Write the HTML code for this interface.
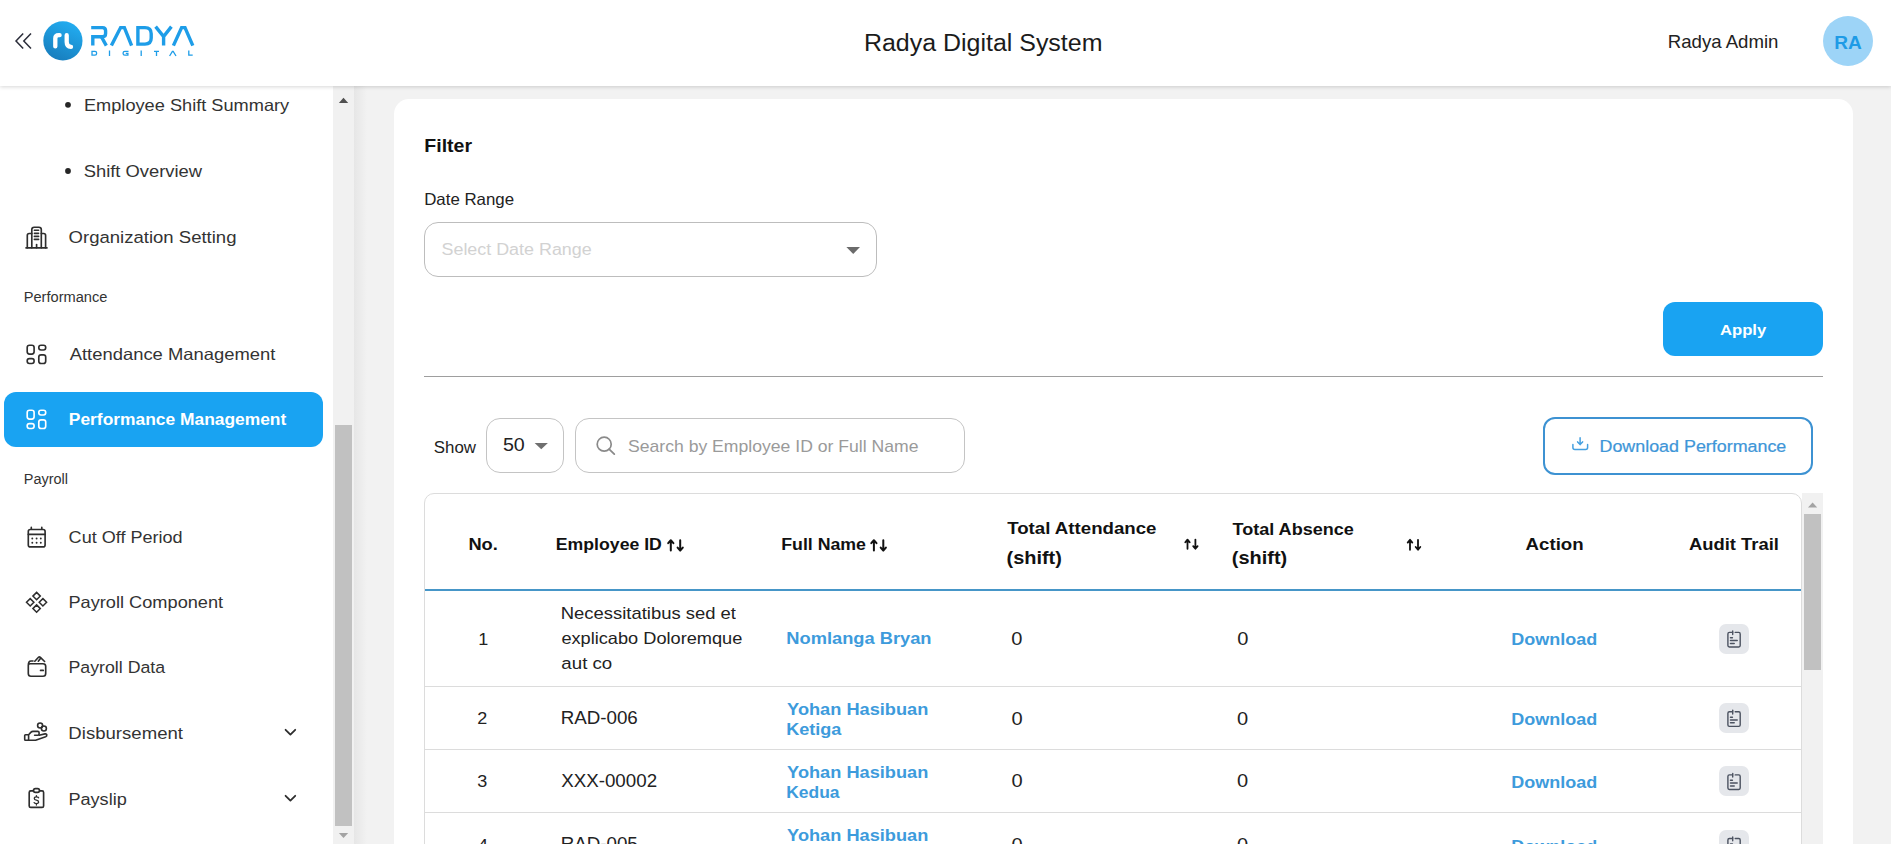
<!DOCTYPE html>
<html><head><meta charset="utf-8">
<style>
*{box-sizing:border-box;margin:0;padding:0}
html,body{width:1891px;height:844px;overflow:hidden;background:#f2f2f2;font-family:"Liberation Sans",sans-serif}
.t{position:absolute;white-space:nowrap;line-height:1}
.b{position:absolute}
svg{position:absolute;overflow:visible}
</style></head><body>
<div class="b" style="left:394px;top:99px;width:1459px;height:800px;background:#fff;border-radius:15px"></div>
<div class="b" style="left:0;top:86px;width:333px;height:758px;background:#fff"></div>
<div class="b" style="left:333px;top:86px;width:21px;height:758px;background:#f1f1f1"></div>
<div class="b" style="left:354px;top:86px;width:13px;height:758px;background:linear-gradient(90deg,#e6e6e6,#f2f2f2)"></div>
<div class="b" style="left:335px;top:425px;width:17px;height:401px;background:#c1c1c1"></div>
<svg style="left:0;top:0" width="1" height="1"><path d="M338.9,103.1 L343.5,97.8 L348.2,103.1 Z" fill="#505050"/><path d="M338.9,833.1 L348.2,833.1 L343.5,838.1 Z" fill="#a3a3a3"/></svg>
<svg style="left:0;top:0" width="1" height="1"><circle cx="68" cy="104.8" r="2.9" fill="#262626"/><circle cx="68" cy="171" r="2.9" fill="#262626"/></svg>
<div class="t" style="left:83.98px;top:95.99px;font-size:18.2px;color:#333333;transform:scaleY(0.93);transform-origin:0 15.41px;">Employee Shift Summary</div>
<div class="t" style="left:83.68px;top:162.15px;font-size:18.37px;color:#333333;transform:scaleY(0.93);transform-origin:0 15.55px;">Shift Overview</div>
<div class="t" style="left:68.57px;top:228.10px;font-size:18.55px;color:#333333;transform:scaleY(0.93);transform-origin:0 15.70px;">Organization Setting</div>
<div class="t" style="left:23.68px;top:290.21px;font-size:14.64px;color:#333;">Performance</div>
<div class="t" style="left:69.70px;top:345.12px;font-size:18.41px;color:#333333;transform:scaleY(0.93);transform-origin:0 15.58px;">Attendance Management</div>
<div class="b" style="left:4px;top:392px;width:319px;height:55px;border-radius:12px;background:#19a3f2"></div>
<div class="t" style="left:68.84px;top:410.97px;font-size:17.4px;color:#fff;font-weight:bold;transform:scaleY(0.93);transform-origin:0 14.73px;">Performance Management</div>
<div class="t" style="left:23.79px;top:472.14px;font-size:14.48px;color:#333;">Payroll</div>
<div class="t" style="left:68.60px;top:528.31px;font-size:18.06px;color:#333333;transform:scaleY(0.93);transform-origin:0 15.29px;">Cut Off Period</div>
<div class="t" style="left:68.48px;top:593.19px;font-size:18.21px;color:#333333;transform:scaleY(0.93);transform-origin:0 15.41px;">Payroll Component</div>
<div class="t" style="left:68.42px;top:659.15px;font-size:17.78px;color:#333333;transform:scaleY(0.93);transform-origin:0 15.05px;">Payroll Data</div>
<div class="t" style="left:68.35px;top:723.97px;font-size:18.58px;color:#333333;transform:scaleY(0.93);transform-origin:0 15.73px;">Disbursement</div>
<div class="t" style="left:68.39px;top:790.25px;font-size:18.13px;color:#333333;transform:scaleY(0.93);transform-origin:0 15.35px;">Payslip</div>
<svg style="left:0;top:0" width="1" height="1">
<g fill="none" stroke="#2e2e2e" stroke-width="1.65" stroke-linecap="round" stroke-linejoin="round">
<path d="M31.8,247.8 V229.6 Q31.8,227.2 34.2,227.2 H38.9 Q41.3,227.2 41.3,229.6 V247.8"/>
<path d="M31.8,233.5 H29.2 Q27.3,233.5 27.3,235.4 V247.8"/>
<path d="M41.3,233.5 H43.7 Q45.6,233.5 45.6,235.4 V247.8"/>
<path d="M26,247.9 H47"/>
<path d="M34.4,230.2 H38.6 M34.4,233.3 H38.6 M34.4,236.4 H38.6 M34.4,239.4 H38.6"/>
<path d="M36.6,244.6 V247.8"/>
</g>
<g fill="none" stroke="#2e2e2e" stroke-width="1.65" transform="translate(0,0)">
<rect x="27.2" y="345.2" width="6.9" height="8.9" rx="2.3"/>
<rect x="38.8" y="345.2" width="6.9" height="4.8" rx="2.2"/>
<rect x="27.2" y="358.6" width="6.9" height="4.9" rx="2.2"/>
<rect x="38.8" y="354.8" width="6.9" height="8.7" rx="2.3"/>
</g><g fill="none" stroke="#ffffff" stroke-width="1.65" transform="translate(0,65)">
<rect x="27.2" y="345.2" width="6.9" height="8.9" rx="2.3"/>
<rect x="38.8" y="345.2" width="6.9" height="4.8" rx="2.2"/>
<rect x="27.2" y="358.6" width="6.9" height="4.9" rx="2.2"/>
<rect x="38.8" y="354.8" width="6.9" height="8.7" rx="2.3"/>
</g><g fill="none" stroke="#2e2e2e" stroke-width="1.65" stroke-linecap="round">
<rect x="28.3" y="529.5" width="16.8" height="17.4" rx="2"/>
<path d="M28.3,534.4 H45.1"/>
<path d="M31.3,527.4 V529.2 M41.8,527.4 V529.2"/>
</g>
<g fill="#2e2e2e"><circle cx="32.3" cy="538.5" r="0.95"/><circle cx="36.6" cy="538.5" r="0.95"/><circle cx="40.8" cy="538.5" r="0.95"/><circle cx="32.3" cy="542.7" r="0.95"/><circle cx="36.6" cy="542.7" r="0.95"/><circle cx="40.8" cy="542.7" r="0.95"/></g>
<path d="M36.6,592.4 L40.300000000000004,596.1 L36.6,599.8000000000001 L32.9,596.1 Z M30.2,598.5999999999999 L33.9,602.3 L30.2,606.0 L26.5,602.3 Z M42.9,598.5999999999999 L46.6,602.3 L42.9,606.0 L39.199999999999996,602.3 Z M36.6,604.9 L40.300000000000004,608.6 L36.6,612.3000000000001 L32.9,608.6 Z " fill="none" stroke="#2e2e2e" stroke-width="1.5" stroke-linejoin="miter"/>
<g fill="none" stroke="#2e2e2e" stroke-width="1.65" stroke-linecap="round" stroke-linejoin="round">
<path d="M28.3,665.5 V673.5 Q28.3,676.2 31,676.2 H43 Q45.7,676.2 45.7,673.5 V666.3 Q45.7,663.7 43,663.7 H30.3 Q28.3,663.7 28.3,665.5 Q28.3,661 31,661 H33"/>
<path d="M34.8,661.2 L38.5,657.3 Q39.3,656.5 40.1,657.2 L44.6,661.5"/>
<path d="M38.3,661.2 L40.6,658.2"/>
<path d="M40.6,670.4 H43.2" stroke-width="1.8"/>
</g>
<g fill="none" stroke="#2e2e2e" stroke-width="1.6" stroke-linecap="round" stroke-linejoin="round">
<circle cx="40.1" cy="725.5" r="2.5"/><circle cx="43.9" cy="728.5" r="2.5"/>
<rect x="24.7" y="734.7" width="3.9" height="5.6" rx="0.8"/>
<path d="M28.6,734.8 L30.8,732.4 Q31.8,731.4 33,731.4 H37.8 Q39.1,731.4 39.1,732.7 V734 Q39.1,735.2 37.8,735.2 H34.6"/>
<path d="M28.6,740.2 H35.6 L45.6,736.7 Q47,736.1 46.8,734.8 Q46.5,733.6 45,733.9 L39.1,735.2"/>
</g>
<g fill="none" stroke="#2e2e2e" stroke-width="1.65" stroke-linecap="round" stroke-linejoin="round">
<path d="M33.4,790.9 H30.8 Q29.2,790.9 29.2,792.5 V806 Q29.2,807.4 30.8,807.4 H42.1 Q43.6,807.4 43.6,806 V792.5 Q43.6,790.9 42.1,790.9 H39.6"/>
<rect x="33.5" y="788.6" width="6" height="3.8" rx="1.9"/>
<path d="M38.6,797.8 Q38.2,796.9 36.4,796.9 Q34.3,796.9 34.3,798.5 Q34.3,799.9 36.4,800.2 Q38.6,800.5 38.6,802.1 Q38.6,803.6 36.4,803.6 Q34.5,803.6 34.1,802.6 M36.4,795.6 V796.9 M36.4,803.6 V805" stroke-width="1.3"/>
</g>
<path d="M285.6,729.8 L290.4,734.6 L295.2,729.8 M285.6,795.8 L290.4,800.6 L295.2,795.8" fill="none" stroke="#2e2e2e" stroke-width="1.8" stroke-linecap="round" stroke-linejoin="round"/>
</svg>
<div class="t" style="left:424.30px;top:135.84px;font-size:19.56px;color:#111;font-weight:bold;transform:scaleY(0.96);transform-origin:0 16.56px;">Filter</div>
<div class="t" style="left:424.20px;top:191.94px;font-size:16.85px;color:#222;transform:scaleY(0.93);transform-origin:0 14.26px;">Date Range</div>
<div class="b" style="left:424px;top:222px;width:453px;height:55px;border:1px solid #bdbdbd;border-radius:14px;background:#fff"></div>
<div class="t" style="left:441.50px;top:240.65px;font-size:17.9px;color:#d2d2d2;transform:scaleY(0.93);transform-origin:0 15.15px;">Select Date Range</div>
<div class="b" style="left:1663px;top:302px;width:160px;height:54px;border-radius:12px;background:#19a3f2"></div>
<div class="t" style="left:1719.94px;top:322.18px;font-size:16.68px;color:#fff;font-weight:bold;transform:scaleY(0.93);transform-origin:0 14.12px;">Apply</div>
<div class="b" style="left:424px;top:376px;width:1399px;height:1px;background:#9e9e9e"></div>
<div class="t" style="left:433.86px;top:439.53px;font-size:16.86px;color:#222;">Show</div>
<div class="b" style="left:486px;top:418px;width:78px;height:55px;border:1px solid #c4c4c4;border-radius:14px"></div>
<div class="t" style="left:502.92px;top:434.95px;font-size:19.67px;color:#222;transform:scaleY(0.93);transform-origin:0 16.65px;">50</div>
<div class="b" style="left:575px;top:418px;width:390px;height:55px;border:1px solid #c4c4c4;border-radius:14px"></div>
<div class="t" style="left:628.02px;top:437.60px;font-size:17.6px;color:#9a9a9a;transform:scaleY(0.93);transform-origin:0 14.90px;">Search by Employee ID or Full Name</div>
<div class="b" style="left:1543px;top:417px;width:270px;height:58px;border:2px solid #3d92d2;border-radius:12px"></div>
<div class="t" style="left:1599.51px;top:438.36px;font-size:17.89px;color:#3e96d8;transform:scaleY(0.93);transform-origin:0 15.14px;-webkit-text-stroke:0.25px #3e96d8;">Download Performance</div>
<svg style="left:0;top:0" width="1" height="1">
<path d="M846.4,247 L860,247 L853.2,254 Z" fill="#6b6b6b"/>
<path d="M534.6,443 L547.9,443 L541.25,449.2 Z" fill="#6f6f6f"/>
<circle cx="604.2" cy="444.2" r="7.0" fill="none" stroke="#8a8a8a" stroke-width="1.7"/>
<path d="M609.1,449.1 L614.3,454.1" stroke="#8a8a8a" stroke-width="1.8" stroke-linecap="round"/>
<g fill="none" stroke="#45a0e0" stroke-width="1.5" stroke-linecap="round" stroke-linejoin="round">
<path d="M572.9,444.6 V447.6 Q572.9,449.6 574.9,449.6 H585.6 Q587.6,449.6 587.6,447.6 V444.6" transform="translate(1000,0)"/>
<path d="M1580.1,437.8 V444.2 M1577.6,441.9 L1580.1,444.6 L1582.6,441.9"/>
</g>
</svg>
<div class="b" style="left:424px;top:493px;width:1378px;height:400px;border:1px solid #dcdcdc;border-radius:10px 10px 0 0;background:#fff"></div>
<div class="b" style="left:1802px;top:493px;width:21px;height:351px;background:#f1f1f1"></div>
<div class="b" style="left:1804px;top:514px;width:17px;height:156px;background:#c1c1c1"></div>
<svg style="left:0;top:0" width="1" height="1"><path d="M1808,507.4 L1812.6,502.4 L1817.2,507.4 Z" fill="#a3a3a3"/></svg>
<div class="b" style="left:425px;top:589px;width:1376px;height:2px;background:#4696c8"></div>
<div class="b" style="left:425px;top:686px;width:1376px;height:1px;background:#dcdcdc"></div>
<div class="b" style="left:425px;top:749px;width:1376px;height:1px;background:#dcdcdc"></div>
<div class="b" style="left:425px;top:812px;width:1376px;height:1px;background:#dcdcdc"></div>
<div class="t" style="left:468.38px;top:535.33px;font-size:18.27px;color:#111;font-weight:bold;transform:scaleY(0.93);transform-origin:0 15.47px;">No.</div>
<div class="t" style="left:555.82px;top:536.33px;font-size:17.68px;color:#111;font-weight:bold;transform:scaleY(0.93);transform-origin:0 14.97px;">Employee ID</div>
<div class="t" style="left:781.22px;top:536.28px;font-size:17.74px;color:#111;font-weight:bold;transform:scaleY(0.93);transform-origin:0 15.02px;">Full Name</div>
<div class="t" style="left:1007.19px;top:519.30px;font-size:18.67px;color:#111;font-weight:bold;transform:scaleY(0.93);transform-origin:0 15.80px;">Total Attendance</div>
<div class="t" style="left:1006.50px;top:548.42px;font-size:19.94px;color:#111;font-weight:bold;transform:scaleY(0.93);transform-origin:0 16.88px;">(shift)</div>
<div class="t" style="left:1232.50px;top:519.81px;font-size:18.06px;color:#111;font-weight:bold;transform:scaleY(0.93);transform-origin:0 15.29px;">Total Absence</div>
<div class="t" style="left:1231.80px;top:548.42px;font-size:19.94px;color:#111;font-weight:bold;transform:scaleY(0.93);transform-origin:0 16.88px;">(shift)</div>
<div class="t" style="left:1525.58px;top:534.70px;font-size:18.66px;color:#111;font-weight:bold;transform:scaleY(0.93);transform-origin:0 15.80px;">Action</div>
<div class="t" style="left:1688.99px;top:534.92px;font-size:18.4px;color:#111;font-weight:bold;transform:scaleY(0.93);transform-origin:0 15.58px;">Audit Trail</div>
<svg style="left:0;top:0" width="1" height="1"><path d="M670.8,550.6 V541.0 M668.1999999999999,543.2 L670.8,540.2 L673.4,543.2 M680.2,540.2 V549.8000000000001 M677.6,547.6 L680.2,550.6 L682.8000000000001,547.6" fill="none" stroke="#111" stroke-width="2.0" stroke-linejoin="round" stroke-linecap="round"/><path d="M873.9,550.6 V541.0 M871.3,543.2 L873.9,540.2 L876.5,543.2 M883.3,540.2 V549.8000000000001 M880.6999999999999,547.6 L883.3,550.6 L885.9,547.6" fill="none" stroke="#111" stroke-width="2.0" stroke-linejoin="round" stroke-linecap="round"/><path d="M1187.5,548.8 V540.4 M1185.3,542.3000000000001 L1187.5,539.6 L1189.7,542.3000000000001 M1195.4,539.6 V548.0 M1193.2,546.0999999999999 L1195.4,548.8 L1197.6000000000001,546.0999999999999" fill="none" stroke="#111" stroke-width="1.8" stroke-linejoin="round" stroke-linecap="round"/><path d="M1410,549.8 V540.5999999999999 M1407.7,542.5999999999999 L1410,539.8 L1412.3,542.5999999999999 M1418,539.8 V549.0 M1415.7,547.0 L1418,549.8 L1420.3,547.0" fill="none" stroke="#111" stroke-width="1.8" stroke-linejoin="round" stroke-linecap="round"/></svg>
<div class="t" style="left:478.30px;top:630.46px;font-size:18px;color:#222;transform:scaleY(0.93);transform-origin:0 15.24px;">1</div>
<div class="t" style="left:560.76px;top:603.88px;font-size:18.45px;color:#222;transform:scaleY(0.93);transform-origin:0 15.62px;">Necessitatibus sed et</div>
<div class="t" style="left:561.39px;top:628.69px;font-size:18.2px;color:#222;transform:scaleY(0.93);transform-origin:0 15.41px;">explicabo Doloremque</div>
<div class="t" style="left:561.37px;top:653.69px;font-size:18.68px;color:#222;transform:scaleY(0.93);transform-origin:0 15.81px;">aut co</div>
<div class="t" style="left:786.28px;top:629.12px;font-size:18.29px;color:#3d9bdc;font-weight:bold;transform:scaleY(0.93);transform-origin:0 15.48px;">Nomlanga Bryan</div>
<div class="t" style="left:1011.33px;top:627.71px;font-size:20.07px;color:#222;transform:scaleY(0.93);transform-origin:0 16.99px;">0</div>
<div class="t" style="left:1237.13px;top:627.71px;font-size:20.07px;color:#222;transform:scaleY(0.93);transform-origin:0 16.99px;">0</div>
<div class="t" style="left:1511.20px;top:630.26px;font-size:18.0px;color:#3d9bdc;font-weight:bold;transform:scaleY(0.93);transform-origin:0 15.24px;">Download</div>
<div class="b" style="left:1719px;top:623.9px;width:30px;height:30px;border-radius:7px;background:#e5e7eb"></div>
<svg style="left:0;top:0" width="1" height="1"><g fill="none" stroke="#4b5260" stroke-width="1.4" stroke-linecap="round" stroke-linejoin="round" transform="translate(0,0.0)"><path d="M1732.6,632.4 H1729.4 Q1727.9,632.4 1727.9,633.9 V645.6 Q1727.9,647 1729.4,647 H1738.8 Q1740.2,647 1740.2,645.6 V633.9 Q1740.2,632.4 1738.8,632.4 H1735.2"/><path d="M1732.7,630.9 V634.6"/><path d="M1730.5,637.8 H1732.4 M1730.5,640.6 H1737.2 M1730.5,643.4 H1734.2" stroke-width="1.5"/></g></svg>
<div class="t" style="left:477.30px;top:709.26px;font-size:18px;color:#222;transform:scaleY(0.93);transform-origin:0 15.24px;">2</div>
<div class="t" style="left:560.63px;top:708.60px;font-size:18.78px;color:#222;transform:scaleY(0.93);transform-origin:0 15.90px;">RAD-006</div>
<div class="t" style="left:787.10px;top:699.88px;font-size:18.22px;color:#3d9bdc;font-weight:bold;transform:scaleY(0.93);transform-origin:0 15.42px;">Yohan Hasibuan</div>
<div class="t" style="left:786.20px;top:720.10px;font-size:18.07px;color:#3d9bdc;font-weight:bold;transform:scaleY(0.93);transform-origin:0 15.30px;">Ketiga</div>
<div class="t" style="left:1011.53px;top:707.51px;font-size:20.07px;color:#222;transform:scaleY(0.93);transform-origin:0 16.99px;">0</div>
<div class="t" style="left:1236.93px;top:707.51px;font-size:20.07px;color:#222;transform:scaleY(0.93);transform-origin:0 16.99px;">0</div>
<div class="t" style="left:1511.20px;top:710.16px;font-size:18.0px;color:#3d9bdc;font-weight:bold;transform:scaleY(0.93);transform-origin:0 15.24px;">Download</div>
<div class="b" style="left:1719px;top:703.3px;width:30px;height:30px;border-radius:7px;background:#e5e7eb"></div>
<svg style="left:0;top:0" width="1" height="1"><g fill="none" stroke="#4b5260" stroke-width="1.4" stroke-linecap="round" stroke-linejoin="round" transform="translate(0,79.39999999999998)"><path d="M1732.6,632.4 H1729.4 Q1727.9,632.4 1727.9,633.9 V645.6 Q1727.9,647 1729.4,647 H1738.8 Q1740.2,647 1740.2,645.6 V633.9 Q1740.2,632.4 1738.8,632.4 H1735.2"/><path d="M1732.7,630.9 V634.6"/><path d="M1730.5,637.8 H1732.4 M1730.5,640.6 H1737.2 M1730.5,643.4 H1734.2" stroke-width="1.5"/></g></svg>
<div class="t" style="left:477.30px;top:772.16px;font-size:18px;color:#222;transform:scaleY(0.93);transform-origin:0 15.24px;">3</div>
<div class="t" style="left:561.17px;top:771.53px;font-size:18.75px;color:#222;transform:scaleY(0.93);transform-origin:0 15.87px;">XXX-00002</div>
<div class="t" style="left:787.10px;top:762.88px;font-size:18.22px;color:#3d9bdc;font-weight:bold;transform:scaleY(0.93);transform-origin:0 15.42px;">Yohan Hasibuan</div>
<div class="t" style="left:786.24px;top:783.61px;font-size:17.47px;color:#3d9bdc;font-weight:bold;transform:scaleY(0.93);transform-origin:0 14.79px;">Kedua</div>
<div class="t" style="left:1011.53px;top:770.41px;font-size:20.07px;color:#222;transform:scaleY(0.93);transform-origin:0 16.99px;">0</div>
<div class="t" style="left:1236.93px;top:770.41px;font-size:20.07px;color:#222;transform:scaleY(0.93);transform-origin:0 16.99px;">0</div>
<div class="t" style="left:1511.20px;top:773.16px;font-size:18.0px;color:#3d9bdc;font-weight:bold;transform:scaleY(0.93);transform-origin:0 15.24px;">Download</div>
<div class="b" style="left:1719px;top:766.4px;width:30px;height:30px;border-radius:7px;background:#e5e7eb"></div>
<svg style="left:0;top:0" width="1" height="1"><g fill="none" stroke="#4b5260" stroke-width="1.4" stroke-linecap="round" stroke-linejoin="round" transform="translate(0,142.5)"><path d="M1732.6,632.4 H1729.4 Q1727.9,632.4 1727.9,633.9 V645.6 Q1727.9,647 1729.4,647 H1738.8 Q1740.2,647 1740.2,645.6 V633.9 Q1740.2,632.4 1738.8,632.4 H1735.2"/><path d="M1732.7,630.9 V634.6"/><path d="M1730.5,637.8 H1732.4 M1730.5,640.6 H1737.2 M1730.5,643.4 H1734.2" stroke-width="1.5"/></g></svg>
<div class="t" style="left:477.90px;top:835.96px;font-size:18px;color:#222;transform:scaleY(0.93);transform-origin:0 15.24px;">4</div>
<div class="t" style="left:560.63px;top:835.30px;font-size:18.78px;color:#222;transform:scaleY(0.93);transform-origin:0 15.90px;">RAD-005</div>
<div class="t" style="left:787.10px;top:825.88px;font-size:18.22px;color:#3d9bdc;font-weight:bold;transform:scaleY(0.93);transform-origin:0 15.42px;">Yohan Hasibuan</div>
<div class="t" style="left:1011.53px;top:834.21px;font-size:20.07px;color:#222;transform:scaleY(0.93);transform-origin:0 16.99px;">0</div>
<div class="t" style="left:1236.93px;top:834.21px;font-size:20.07px;color:#222;transform:scaleY(0.93);transform-origin:0 16.99px;">0</div>
<div class="t" style="left:1511.20px;top:836.96px;font-size:18.0px;color:#3d9bdc;font-weight:bold;transform:scaleY(0.93);transform-origin:0 15.24px;">Download</div>
<div class="b" style="left:1719px;top:830px;width:30px;height:30px;border-radius:7px;background:#e5e7eb"></div>
<svg style="left:0;top:0" width="1" height="1"><g fill="none" stroke="#4b5260" stroke-width="1.4" stroke-linecap="round" stroke-linejoin="round" transform="translate(0,206.10000000000002)"><path d="M1732.6,632.4 H1729.4 Q1727.9,632.4 1727.9,633.9 V645.6 Q1727.9,647 1729.4,647 H1738.8 Q1740.2,647 1740.2,645.6 V633.9 Q1740.2,632.4 1738.8,632.4 H1735.2"/><path d="M1732.7,630.9 V634.6"/><path d="M1730.5,637.8 H1732.4 M1730.5,640.6 H1737.2 M1730.5,643.4 H1734.2" stroke-width="1.5"/></g></svg>
<div class="b" style="left:0;top:0;width:1891px;height:86px;background:#fff;box-shadow:0 1px 4px rgba(0,0,0,.16);z-index:2"></div>
<div style="position:absolute;left:0;top:0;z-index:3">
<div class="t" style="left:863.92px;top:30.27px;font-size:24.96px;color:#1b1b1b;transform:scaleY(0.93);transform-origin:0 21.13px;">Radya Digital System</div>
<div class="t" style="left:1667.75px;top:32.64px;font-size:18.62px;color:#222;transform:scaleY(0.98);transform-origin:0 15.76px;">Radya Admin</div>
<div class="b" style="left:1823px;top:16px;width:50px;height:50px;border-radius:50%;background:#9dd4f7"></div>
<div class="t" style="left:1834.13px;top:33.02px;font-size:19.11px;color:#1e9be6;font-weight:bold;">RA</div>
<svg style="left:0;top:0" width="1" height="1">
<path d="M23.2,33.6 L16,41.1 L23.2,48.6 M31,33.6 L23.8,41.1 L31,48.6" fill="none" stroke="#2b2d3a" stroke-width="1.5"/>
<defs><linearGradient id="lg" x1="0.75" y1="0.05" x2="0.35" y2="0.95"><stop offset="0" stop-color="#22acf0"/><stop offset="1" stop-color="#1880c0"/></linearGradient></defs>
<circle cx="62.9" cy="40.8" r="19.6" fill="url(#lg)"/>
<path d="M55.3,46.4 V38.6 Q55.3,35.2 58.7,35.2 H59.6" fill="none" stroke="#fff" stroke-width="4.3" stroke-linecap="round"/>
<path d="M66.7,35.2 V42 Q66.7,46.6 71,46.8" fill="none" stroke="#fff" stroke-width="4.3" stroke-linecap="round"/>
<g fill="none" stroke="#1e9de8" stroke-width="3.4">
<path d="M91.2,27.6 H102.5 Q105.6,27.6 105.6,30.8 V33.6 Q105.6,36.8 102.5,36.8 H92.8 V45.6"/>
<path d="M101.5,37 L106.3,45.6"/>
<path d="M111.4,45.6 L120.6,27.6 H124.4 L131.6,45.6"/>
<path d="M137.9,27.6 V44.1 H145 Q151.2,44.1 151.2,38 V33.7 Q151.2,27.6 145,27.6 Z"/>
<path d="M155.6,26.6 L163.6,36.6 L171.4,26.6 M163.6,36 V45.6"/>
<path d="M173.4,45.6 L181.6,27.6 H185 L192.8,45.6"/>
</g>
<g fill="none" stroke="#1e9de8" stroke-width="1.3">
<path d="M92,51.3 H95 Q96.6,51.3 96.6,53 V53.5 Q96.6,55.2 95,55.2 H92 Z"/>
<path d="M109.5,50.5 V56"/>
<path d="M128.5,51.3 H124.8 Q123.1,51.3 123.1,53 V53.5 Q123.1,55.2 124.8,55.2 H127.9 V53.4 H125.8"/>
<path d="M141.2,50.5 V56"/>
<path d="M154,51.3 H159 M156.5,51.3 V56"/>
<path d="M169.6,56 L172.4,51.3 L173.2,51.3 L176,56"/>
<path d="M188.8,50.5 V55.2 H192.7"/>
</g>
</svg>
</div>
</body></html>
